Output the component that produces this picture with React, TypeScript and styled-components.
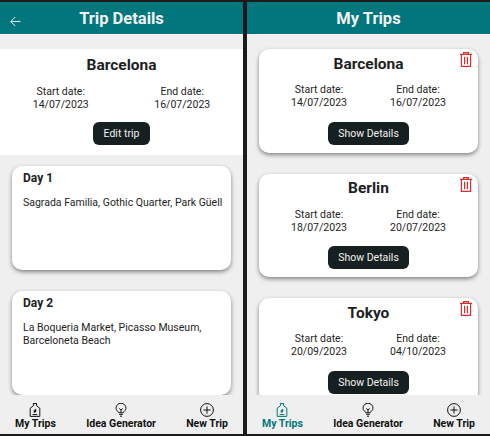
import React from 'react'
import styled, { createGlobalStyle } from 'styled-components'

const Global = createGlobalStyle`
  html, body { margin: 0; padding: 0; background: #1b1b1b; }
  body { font-family: Roboto, "Liberation Sans", sans-serif; }
`

const trips = [
  { city: 'Barcelona', start: '14/07/2023', end: '16/07/2023' },
  { city: 'Berlin', start: '18/07/2023', end: '20/07/2023' },
  { city: 'Tokyo', start: '20/09/2023', end: '04/10/2023' },
]

const BagIcon = () => (
  <svg width="14" height="14" viewBox="0 0 14 14" fill="none" stroke="currentColor" strokeWidth="1">
    <path d="M5 .6h4M5.4.6v2.2L2.2 5.2v8.2h9.6V5.2L8.6 2.8V.6" />
    <path d="M7 5.4l.6 1.2 1.4.2-1 1 .2 1.3L7 9.5l-1.2.6.2-1.3-1-1 1.4-.2z" fill="currentColor" stroke="none" />
    <path d="M4.6 11.6h4.8" />
  </svg>
)

const BulbIcon = () => (
  <svg width="14" height="14" viewBox="0 0 14 14" fill="none" stroke="currentColor" strokeWidth="1">
    <path d="M4.8 9.8C4.6 8.4 2 7.6 2 5.2a5 5 0 0 1 10 0c0 2.4-2.6 3.2-2.8 4.6z" />
    <path d="M5.2 5.4L7 7l1.8-1.6M7 7v2.8M5.2 11.4h3.6M6 13.2h2" />
  </svg>
)

const PlusIcon = () => (
  <svg width="14" height="14" viewBox="0 0 14 14" fill="none" stroke="currentColor" strokeWidth="1">
    <circle cx="7" cy="7" r="6.4" />
    <path d="M3.4 7h7.2M7 3.4v7.2" />
  </svg>
)

const BackIcon = () => (
  <svg width="11" height="11" viewBox="0 0 11 11" fill="none" stroke="currentColor" strokeWidth="1">
    <path d="M10.5 5.5H.8M5.2 1L.8 5.5 5.2 10" />
  </svg>
)

const TrashIcon = () => (
  <svg width="12" height="15" viewBox="0 0 12 15" fill="none" stroke="currentColor" strokeWidth="1.2">
    <path d="M0 2.4h12M3.6 2.4V.6h4.8v1.8M1.4 2.4v12h9.2v-12M4.6 4.8v7.4M7.4 4.8v7.4" />
  </svg>
)

const BottomNav = ({ active }: { active?: boolean }) => (
  <Nav>
    <NavItem $active={active}>
      <BagIcon />
      <span>My Trips</span>
    </NavItem>
    <NavItem>
      <BulbIcon />
      <span>Idea Generator</span>
    </NavItem>
    <NavItem>
      <PlusIcon />
      <span>New Trip</span>
    </NavItem>
  </Nav>
)

const Dates = ({ start, end, inset }: { start: string; end: string; inset?: boolean }) => (
  <DateRow $inset={inset}>
    <DateCol>
      <div>Start date:</div>
      <div>{start}</div>
    </DateCol>
    <DateCol>
      <div>End date:</div>
      <div>{end}</div>
    </DateCol>
  </DateRow>
)

export default function App() {
  return (
    <Page>
      <Global />
      <Panel>
        <Header>
          <Back>
            <BackIcon />
          </Back>
          Trip Details
        </Header>
        <Content>
          <Summary>
            <City>Barcelona</City>
            <Dates start="14/07/2023" end="16/07/2023" />
            <Button $wide={false}>Edit trip</Button>
          </Summary>
          <DayList>
            <DayCard>
              <DayTitle>Day 1</DayTitle>
              <DayText>Sagrada Familia, Gothic Quarter, Park Güell</DayText>
            </DayCard>
            <DayCard>
              <DayTitle>Day 2</DayTitle>
              <DayText>La Boqueria Market, Picasso Museum, Barceloneta Beach</DayText>
            </DayCard>
          </DayList>
        </Content>
        <BottomNav />
      </Panel>
      <Panel>
        <Header>My Trips</Header>
        <Content>
          <TripList>
            {trips.map((t) => (
              <TripCard key={t.city}>
                <Trash>
                  <TrashIcon />
                </Trash>
                <City>{t.city}</City>
                <Dates start={t.start} end={t.end} inset />
                <Button $wide>Show Details</Button>
              </TripCard>
            ))}
          </TripList>
        </Content>
        <BottomNav active />
      </Panel>
    </Page>
  )
}

const Page = styled.div`
  width: 490px;
  height: 436px;
  box-sizing: border-box;
  padding: 2px 0;
  display: flex;
  gap: 4px;
  background: #1b1b1b;
  overflow: hidden;
`
const Panel = styled.div`
  flex: 1;
  display: flex;
  flex-direction: column;
  background: #efefef;
  overflow: hidden;
`
const Header = styled.div`
  position: relative;
  height: 32px;
  flex-shrink: 0;
  display: flex;
  align-items: center;
  justify-content: center;
  background: #01767c;
  color: #f1f1f1;
  font-size: 16.5px;
  font-weight: 700;
`
const Back = styled.div`
  position: absolute;
  left: 10px;
  top: 10px;
  height: 11px;
  color: #dfeeee;
`
const Content = styled.div`
  flex: 1;
  min-height: 0;
  overflow: hidden;
`
const Summary = styled.div`
  margin-top: 15px;
  height: 106px;
  box-sizing: border-box;
  padding-top: 6px;
  background: #fff;
  display: flex;
  flex-direction: column;
  align-items: center;
`
const City = styled.div`
  font-size: 15.5px;
  font-weight: 700;
  line-height: 20px;
  color: #1c2222;
`
const DateRow = styled.div<{ $inset?: boolean }>`
  align-self: stretch;
  display: grid;
  grid-template-columns: 1fr 1fr;
  margin-top: ${(p) => (p.$inset ? '9.5px' : '10px')};
  padding: 0 ${(p) => (p.$inset ? '10.5px' : '0')};
`
const DateCol = styled.div`
  text-align: center;
  font-size: 10.5px;
  line-height: 13px;
  color: #1e2424;
`
const Button = styled.button<{ $wide?: boolean }>`
  margin-top: ${(p) => (p.$wide ? '12.5px' : '11px')};
  height: 23px;
  padding: 0;
  width: ${(p) => (p.$wide ? '81px' : '57px')};
  border: none;
  border-radius: 6px;
  background: #172020;
  color: #f1f1f1;
  font-family: inherit;
  font-size: 10.5px;
`
const DayList = styled.div`
  display: flex;
  flex-direction: column;
  gap: 21px;
  padding: 11px 12px 0;
`
const DayCard = styled.div`
  height: 104px;
  flex-shrink: 0;
  box-sizing: border-box;
  padding: 5px 8px 5px 11px;
  background: #fff;
  border-radius: 10px;
  box-shadow: 0 2px 4px rgba(0, 0, 0, 0.45);
`
const DayTitle = styled.div`
  font-size: 12px;
  font-weight: 700;
  line-height: 15px;
  color: #1c2222;
`
const DayText = styled.div`
  margin-top: 10px;
  font-size: 10.5px;
  line-height: 13px;
  color: #1e2424;
`
const TripList = styled.div`
  display: flex;
  flex-direction: column;
  gap: 21px;
  padding: 15px 12px 0;
`
const TripCard = styled.div`
  position: relative;
  height: 103.5px;
  flex-shrink: 0;
  box-sizing: border-box;
  padding-top: 4.5px;
  background: #fff;
  border-radius: 10px;
  box-shadow: 0 2px 4px rgba(0, 0, 0, 0.45);
  display: flex;
  flex-direction: column;
  align-items: center;
`
const Trash = styled.div`
  position: absolute;
  top: 3px;
  right: 6px;
  height: 15px;
  color: #d32f2f;
`
const Nav = styled.div`
  height: 39px;
  flex-shrink: 0;
  display: flex;
  justify-content: space-between;
  padding: 0 15px;
  background: #efefef;
`
const NavItem = styled.div<{ $active?: boolean }>`
  display: flex;
  flex-direction: column;
  align-items: center;
  padding-top: 8px;
  font-size: 10.5px;
  font-weight: 700;
  line-height: 13px;
  color: ${(p) => (p.$active ? '#01767c' : '#111')};
`
